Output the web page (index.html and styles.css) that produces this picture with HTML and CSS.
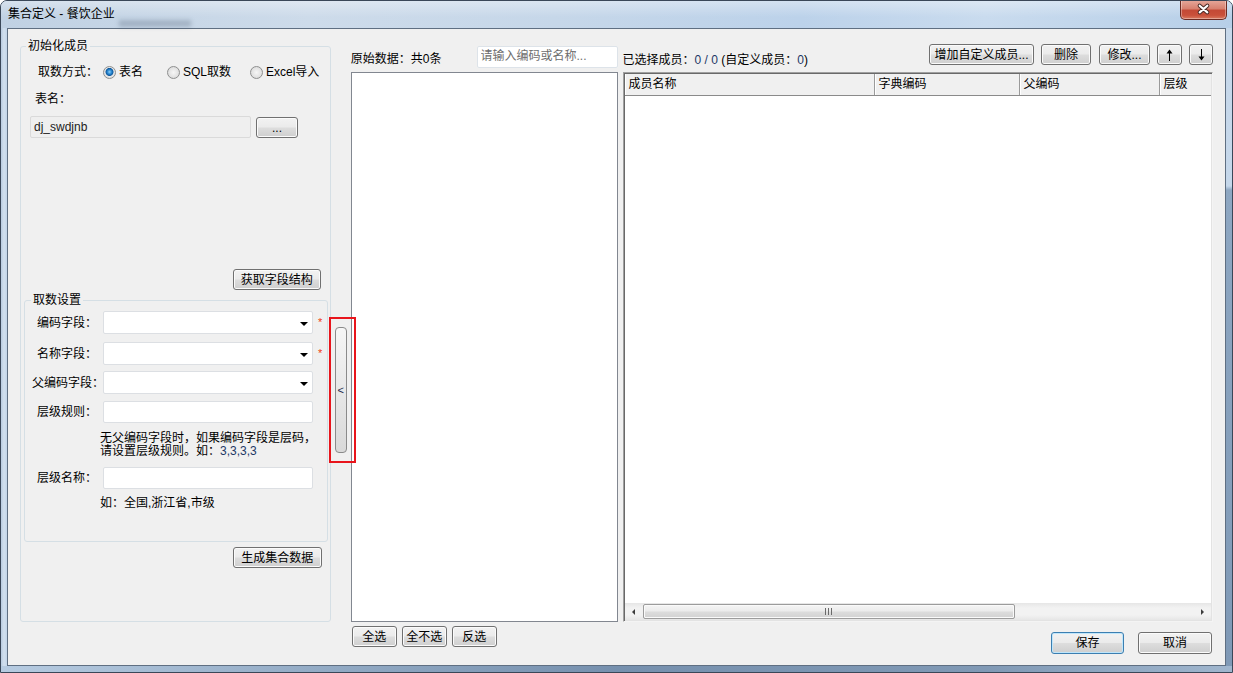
FILE: index.html
```html
<!DOCTYPE html>
<html lang="zh-CN">
<head>
<meta charset="utf-8">
<title>集合定义 - 餐饮企业</title>
<link rel="stylesheet" href="styles.css">
</head>
<body>
<div class="window">
  <div class="titlebar">
    <span class="title">集合定义 - 餐饮企业</span>
    <span class="ghost"></span>
    <div class="close">
      <svg width="47" height="19" viewBox="0 0 47 19">
        <path d="M19.5 5.5 L27.5 12.5 M27.5 5.5 L19.5 12.5" stroke="#4a2a26" stroke-width="4.2" stroke-linecap="round"/>
        <path d="M19.5 5.5 L27.5 12.5 M27.5 5.5 L19.5 12.5" stroke="#ffffff" stroke-width="2.2" stroke-linecap="round"/>
      </svg>
    </div>
  </div>
  <div class="mid-frame">
    <div class="frame-side fl"></div>
    <div class="client">
      <div class="main">
        <fieldset class="grp outer">
          <legend>初始化成员</legend>
          <div class="radio-row">
            <span class="rlabel">取数方式：</span>
            <span class="opt opt1"><span class="radio on"></span>表名</span>
            <span class="opt opt2"><span class="radio"></span>SQL取数</span>
            <span class="opt"><span class="radio"></span>Excel导入</span>
          </div>
          <div class="tname">表名：</div>
          <div class="file-row">
            <div class="ro-input">dj_swdjnb</div>
            <button class="btn btn-dots">...</button>
          </div>
          <button class="btn btn-fetch">获取字段结构</button>
          <fieldset class="grp inner">
            <legend>取数设置</legend>
            <div class="frow r1">
              <span class="flabel">编码字段：</span>
              <div class="combo"><span class="caret"></span></div>
              <span class="star">*</span>
            </div>
            <div class="frow r2">
              <span class="flabel">名称字段：</span>
              <div class="combo"><span class="caret"></span></div>
              <span class="star">*</span>
            </div>
            <div class="frow r3">
              <span class="flabel">父编码字段：</span>
              <div class="combo"><span class="caret"></span></div>
            </div>
            <div class="frow r4">
              <span class="flabel">层级规则：</span>
              <div class="tinput"></div>
            </div>
            <div class="hint h1">无父编码字段时，如果编码字段是层码，<br>请设置层级规则。如：<span class="num">3,3,3,3</span></div>
            <div class="frow r5">
              <span class="flabel">层级名称：</span>
              <div class="tinput"></div>
            </div>
            <div class="hint h2">如：全国,浙江省,市级</div>
          </fieldset>
          <button class="btn btn-gen">生成集合数据</button>
        </fieldset>

        <div class="splitter">
          <div class="split-btn">&lt;</div>
          <div class="mark"></div>
        </div>

        <div class="midcol">
          <div class="mid-head">
            <span class="mid-title">原始数据：共0条</span>
            <input class="search" type="text" placeholder="请输入编码或名称...">
          </div>
          <div class="listbox"></div>
          <div class="sel-btns">
            <button class="btn sb">全选</button>
            <button class="btn sb">全不选</button>
            <button class="btn sb">反选</button>
          </div>
        </div>

        <div class="rightcol">
          <div class="right-head">
            <span class="sel-info">已选择成员：<span class="num">0 / 0</span> (自定义成员：<span class="num">0</span>)</span>
            <button class="btn b-add">增加自定义成员...</button>
            <button class="btn b-del">删除</button>
            <button class="btn b-mod">修改...</button>
            <button class="btn b-up" aria-label="上移"><svg width="7" height="12" viewBox="0 0 7 12"><path d="M3.5 3 V12" stroke="#000" stroke-width="1"/><path d="M3.5 0.5 L6.5 4.5 H0.5 Z" fill="#000"/></svg></button>
            <button class="btn b-down" aria-label="下移"><svg width="7" height="12" viewBox="0 0 7 12"><path d="M3.5 0 V9" stroke="#000" stroke-width="1"/><path d="M3.5 11.5 L6.5 7.5 H0.5 Z" fill="#000"/></svg></button>
          </div>
          <div class="table">
            <div class="thead">
              <div class="th">成员名称</div>
              <div class="th">字典编码</div>
              <div class="th">父编码</div>
              <div class="th last">层级</div>
            </div>
            <div class="tbody"></div>
            <div class="hscroll">
              <div class="sarrow"><span class="tri-l"></span></div>
              <div class="thumb">
                <svg width="7" height="7" viewBox="0 0 7 7"><path d="M0.5 0 V7 M3.5 0 V7 M6.5 0 V7" stroke="#6a6a6a" stroke-width="1"/></svg>
              </div>
              <div class="strack"></div>
              <div class="sarrow"><span class="tri-r"></span></div>
            </div>
          </div>
          <div class="footer">
            <button class="btn b-save">保存</button>
            <button class="btn b-cancel">取消</button>
          </div>
        </div>
      </div>
    </div>
    <div class="frame-side fr"></div>
  </div>
  <div class="frame-bottom"></div>
</div>
</body>
</html>
```
FILE: styles.css
```css
* { box-sizing: border-box; }
html, body { margin: 0; padding: 0; }
body {
  width: 1233px;
  height: 673px;
  overflow: hidden;
  background: #ffffff;
  font-family: "Liberation Sans", "Noto Sans CJK SC", sans-serif;
  font-size: 12px;
  line-height: 14px;
  color: #000;
}

.window {
  width: 1233px;
  height: 673px;
  display: flex;
  flex-direction: column;
  border: 1px solid #3a4758;
  border-radius: 7px 7px 0 0;
  overflow: hidden;
  background: #c2d5e9;
}

/* title bar */
.titlebar {
  position: relative;
  height: 27px;
  display: flex;
  align-items: flex-start;
  padding-left: 7px;
  background:
    linear-gradient(180deg, rgba(255,255,255,0.35) 0%, rgba(255,255,255,0) 60%),
    linear-gradient(90deg, #c0d1e3 0%, #cddbea 25%, #c6d7e9 45%, #bcd2ea 65%, #c9dbee 80%, #b7cfe8 100%);
}
.title {
  margin-top: 6px;
  line-height: 14px;
  color: #000;
}
.ghost {
  position: absolute;
  left: 118px;
  top: 19px;
  width: 72px;
  height: 7px;
  background: rgba(80, 95, 120, 0.3);
  filter: blur(2px);
}
.close {
  margin-left: auto;
  margin-right: 5px;
  margin-top: -1px;
  width: 47px;
  height: 20px;
  border: 1px solid #6b2a22;
  border-top: none;
  border-radius: 0 0 5px 5px;
  background: linear-gradient(180deg, #e6a99c 0%, #d78170 45%, #c44a36 55%, #c9503a 80%, #d97a60 100%);
  box-shadow: inset 0 0 0 1px rgba(255,255,255,0.35);
  display: flex;
  align-items: center;
  justify-content: center;
}

/* frame */
.mid-frame {
  display: flex;
  height: 638px;
}
.frame-side {
  width: 6px;
}
.fl {
  background: linear-gradient(90deg, #b8cbe0 0%, #d2e0ee 50%, #c2d4e8 100%);
}
.fr {
  background: linear-gradient(180deg, #c7d8ea 0, #c5d7ea 158px, #8ea7c2 162px, #7f99b6 100%);
}
.frame-bottom {
  height: 6px;
  background: linear-gradient(90deg, #b6cbe1 0%, #94acc6 25%, #7690ae 50%, #8099b5 80%, #a0b6ce 100%);
}

.client {
  width: 1219px;
  height: 638px;
  border: 1px solid #5f6f82;
  background: #f0f0f0;
}

.main {
  display: flex;
  align-items: flex-start;
  padding: 10px 12px 0 12px;
}

/* group boxes */
.grp {
  margin: 0;
  padding: 0;
  min-width: 0;
  border: 1px solid #d5dfe5;
  border-radius: 3px;
  display: flex;
  flex-direction: column;
}
.grp > legend {
  padding: 0 2px;
  margin-left: 5px;
  line-height: 14px;
}
.outer {
  width: 311px;
  height: 583px;
}
.inner {
  width: 304px;
  height: 249px;
  margin: 3px 1px 0 3px;
}
.inner > legend { margin-left: 6px; }

/* buttons */
.btn {
  font: inherit;
  line-height: 14px;
  color: #000;
  padding: 0;
  height: 21px;
  border: 1px solid #707070;
  border-radius: 3px;
  background: linear-gradient(180deg, #f2f2f2 0%, #ebebeb 48%, #dddddd 52%, #cfcfcf 100%);
  box-shadow: inset 0 0 0 1px #fbfbfb;
  cursor: default;
}

/* radio row */
.radio-row {
  margin-top: 11px;
  height: 16px;
  display: flex;
  align-items: center;
  padding-left: 17px;
}
.rlabel { width: 65px; }
.opt {
  display: flex;
  align-items: center;
  gap: 3px;
}
.opt1 { width: 64px; }
.opt2 { width: 83px; }
.radio {
  width: 13px;
  height: 13px;
  border-radius: 50%;
  border: 1px solid #8e8f8f;
  background: radial-gradient(circle at 50% 50%, #f6f6f6 0, #e2e2e2 60%, #cfcfcf 100%);
  flex: none;
}
.radio.on {
  background: radial-gradient(circle at 50% 45%, #8fd0f6 0, #2c8ad3 2px, #0f5a9e 3.6px, #e8e8e8 4.4px, #d2d2d2 100%);
}

.tname {
  margin-top: 11px;
  padding-left: 14px;
  line-height: 16px;
}
.file-row {
  margin-top: 8px;
  display: flex;
  align-items: center;
  padding-left: 9px;
}
.ro-input {
  width: 221px;
  height: 22px;
  border: 1px solid #dadada;
  border-radius: 2px;
  background: #efefef;
  padding: 3px 0 0 3px;
  color: #222;
}
.btn-dots {
  margin-left: 5px;
  width: 42px;
  height: 21px;
  margin-top: 2px;
}
.btn-fetch {
  margin-top: 131px;
  align-self: flex-end;
  margin-right: 9px;
  width: 88px;
}
.btn-gen {
  margin-top: 5px;
  align-self: flex-end;
  margin-right: 8px;
  width: 89px;
}

/* field rows */
.frow {
  display: flex;
  align-items: center;
  height: 23px;
}
.r1 { margin-top: 4px; }
.r2 { margin-top: 8px; }
.r3 { margin-top: 6px; }
.r4 { margin-top: 7px; height: 22px; }
.r5 { margin-top: 9px; height: 22px; }
.flabel {
  width: 70px;
  margin-left: 7px;
  text-align: center;
  white-space: nowrap;
}
.combo {
  margin-left: 1px;
  width: 210px;
  height: 23px;
  border: 1px solid #dcdfe3;
  border-radius: 2px;
  background: #ffffff;
  display: flex;
  align-items: center;
  justify-content: flex-end;
  padding-right: 4px;
}
.caret {
  width: 0;
  height: 0;
  border-left: 4px solid transparent;
  border-right: 4px solid transparent;
  border-top: 4px solid #000;
  margin-top: 2px;
}
.tinput {
  margin-left: 1px;
  width: 210px;
  height: 22px;
  border: 1px solid #dcdfe3;
  border-radius: 2px;
  background: #ffffff;
}
.star {
  margin-left: 5px;
  color: #f03c0f;
  font-size: 11px;
  line-height: 11px;
}
.hint {
  padding-left: 75px;
  line-height: 13px;
  white-space: nowrap;
}
.h1 { margin-top: 9px; }
.h2 { margin-top: 7px; line-height: 14px; }
.num { color: #1d3866; }

/* splitter */
.splitter {
  position: relative;
  width: 20px;
  height: 583px;
}
.split-btn {
  margin-top: 288px;
  margin-left: 4px;
  width: 12px;
  height: 126px;
  border: 1px solid #8a8a8a;
  border-radius: 4px;
  background: linear-gradient(180deg, #f6f6f6 0%, #e9e9e9 45%, #d9d9d9 100%);
  display: flex;
  align-items: center;
  justify-content: center;
  font-size: 11px;
  color: #1c2a4a;
}
.mark {
  position: absolute;
  left: -2px;
  top: 278px;
  width: 27px;
  height: 146px;
  border: 2px solid #e8151c;
}

/* middle */
.midcol {
  width: 267px;
  display: flex;
  flex-direction: column;
}
.mid-head {
  height: 33px;
  display: flex;
  align-items: flex-end;
  justify-content: space-between;
  padding-bottom: 4px;
}
.mid-title { margin-bottom: 2px; }
.search {
  width: 141px;
  height: 22px;
  margin: 0;
  border: 1px solid #dde3e9;
  border-radius: 2px;
  background: #fff;
  font: inherit;
  line-height: 14px;
  padding: 0 0 2px 3px;
  outline: none;
}
.search::placeholder { color: #6d6d6d; opacity: 1; }
.listbox {
  height: 550px;
  border: 1px solid #828790;
  background: #fff;
}
.sel-btns {
  margin-top: 4px;
  padding-left: 1px;
  display: flex;
  gap: 5px;
}
.sb { width: 45px; }

/* right */
.rightcol {
  width: 591px;
  margin-left: 5px;
  display: flex;
  flex-direction: column;
}
.right-head {
  height: 33px;
  display: flex;
  align-items: flex-end;
  padding-bottom: 7px;
}
.sel-info { margin-bottom: -2px; white-space: nowrap; }
.b-add { margin-left: auto; width: 105px; }
.b-del { margin-left: 7px; width: 50px; }
.b-mod { margin-left: 8px; width: 51px; }
.b-up { margin-left: 7px; width: 25px; }
.b-down { margin-left: 7px; width: 24px; }
.b-up, .b-down {
  display: flex;
  align-items: center;
  justify-content: center;
}

.table {
  height: 550px;
  border: 1px solid;
  border-color: #a0a0a0 #f4f4f4 #f4f4f4 #a0a0a0;
  box-shadow: inset 1px 1px 0 #696969, inset -1px -1px 0 #e3e3e3;
  background: #fff;
  display: flex;
  flex-direction: column;
  padding: 1px 1px 1px 1px;
}
.thead {
  height: 22px;
  display: grid;
  grid-template-columns: 250px 145px 140px 1fr;
  background: #f0f0f0;
  border-bottom: 1px solid #8a8a8a;
  flex: none;
}
.th {
  padding-left: 4px;
  line-height: 21px;
  border-right: 1px solid #9a9a9a;
  box-shadow: inset 1px 0 0 #ffffff;
  white-space: nowrap;
  overflow: hidden;
}
.th.last { border-right: none; }
.tbody { flex: 1; background: #fff; }
.hscroll {
  height: 17px;
  display: flex;
  align-items: center;
  background: linear-gradient(180deg, #e6e6e6 0%, #f2f2f2 30%, #f2f2f2 70%, #e6e6e6 100%);
  flex: none;
}
.sarrow {
  width: 17px;
  height: 17px;
  display: flex;
  align-items: center;
  justify-content: center;
  flex: none;
}
.tri-l {
  width: 0; height: 0;
  border-top: 3px solid transparent;
  border-bottom: 3px solid transparent;
  border-right: 3px solid #3c3c3c;
}
.tri-r {
  width: 0; height: 0;
  border-top: 3px solid transparent;
  border-bottom: 3px solid transparent;
  border-left: 3px solid #3c3c3c;
}
.thumb {
  width: 372px;
  height: 15px;
  margin-left: 1px;
  border: 1px solid #9c9c9c;
  border-radius: 2px;
  background: linear-gradient(180deg, #f5f5f5 0%, #ececec 45%, #dcdcdc 55%, #d2d2d2 100%);
  box-shadow: inset 0 0 0 1px #fafafa;
  display: flex;
  align-items: center;
  justify-content: center;
  flex: none;
}
.strack { flex: 1; }

.footer {
  margin-top: 10px;
  display: flex;
  justify-content: flex-end;
  gap: 14px;
  padding-right: 1px;
}
.b-save, .b-cancel { height: 22px; }
.b-save {
  width: 73px;
  border-color: #3c7fb1;
  box-shadow: inset 0 0 0 1px #bfe6fb;
}
.b-cancel { width: 74px; }
```
